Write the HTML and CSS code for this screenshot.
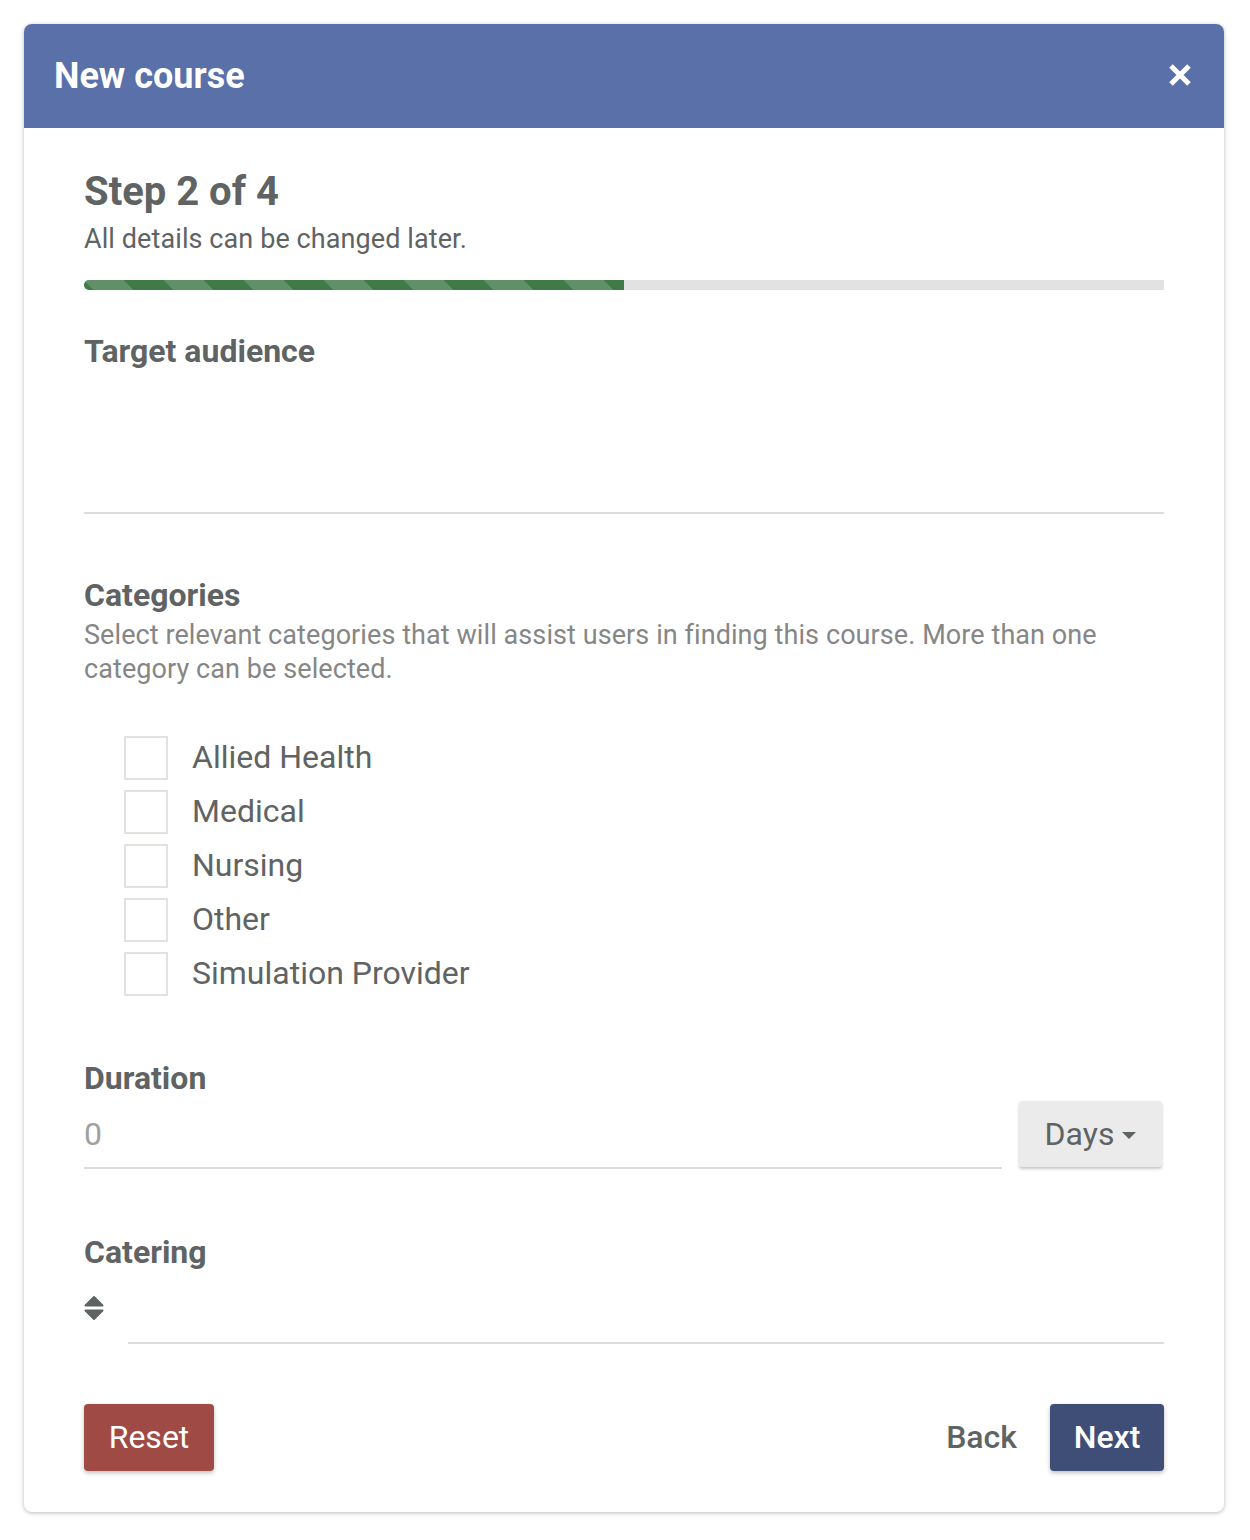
FILE: index.html
```html
<!DOCTYPE html>
<html lang="en">
<head>
<meta charset="utf-8">
<title>New course</title>
<link rel="stylesheet" href="styles.css">
</head>
<body>
<div class="modal">
  <header class="modal-header">
    <h1 class="modal-title">New course</h1>
    <button class="close-btn" aria-label="Close">
      <svg width="24" height="24" viewBox="0 0 24 24"><path d="M3 3 L21 21 M21 3 L3 21" stroke="#fff" stroke-width="5" fill="none"/></svg>
    </button>
  </header>
  <div class="modal-body">
    <h2 class="step">Step 2 of 4</h2>
    <p class="sub">All details can be changed later.</p>
    <div class="progress"><div class="progress-bar" style="width:50%"></div></div>

    <label class="field-label label-target">Target audience</label>
    <div class="textarea"></div>

    <label class="field-label label-categories">Categories</label>
    <p class="help">Select relevant categories that will assist users in finding this course. More than one category can be selected.</p>
    <ul class="checklist">
      <li class="check-row"><span class="box"></span><span class="check-label">Allied Health</span></li>
      <li class="check-row"><span class="box"></span><span class="check-label">Medical</span></li>
      <li class="check-row"><span class="box"></span><span class="check-label">Nursing</span></li>
      <li class="check-row"><span class="box"></span><span class="check-label">Other</span></li>
      <li class="check-row"><span class="box"></span><span class="check-label">Simulation Provider</span></li>
    </ul>

    <label class="field-label label-duration">Duration</label>
    <div class="duration-row">
      <div class="input"><span class="placeholder">0</span></div>
      <button class="days-btn">Days <span class="caret"></span></button>
    </div>

    <label class="field-label label-catering">Catering</label>
    <div class="catering-row">
      <svg class="sort-icon" width="20" height="26" viewBox="0 0 20 26"><path d="M1.5 10.5 L10 2 L18.5 10.5 Z" fill="#5f6363" stroke="#5f6363" stroke-width="2" stroke-linejoin="round"/><path d="M1.5 15.5 L18.5 15.5 L10 24 Z" fill="#5f6363" stroke="#5f6363" stroke-width="2" stroke-linejoin="round"/></svg>
      <div class="select"></div>
    </div>

    <footer class="modal-footer">
      <button class="btn btn-reset">Reset</button>
      <div class="footer-right">
        <button class="btn btn-flat">Back</button>
        <button class="btn btn-next">Next</button>
      </div>
    </footer>
  </div>
</div>
</body>
</html>
```

FILE: styles.css
```css
html, body {
  margin: 0;
  padding: 0;
  background: #fff;
}
body {
  font-family: Roboto, "Noto Sans", Arial, sans-serif;
  color: #5f6363;
}
.modal {
  margin: 24px;
  width: 1200px;
  border-radius: 8px;
  box-shadow: 0 1px 4px rgba(0,0,0,0.28);
  background: #fff;
  overflow: hidden;
}
.modal-header {
  height: 104px;
  background: #5970a8;
  display: flex;
  align-items: center;
  justify-content: space-between;
  padding: 0 32px 0 30px;
  box-sizing: border-box;
}
.modal-title {
  margin: 0;
  color: #fff;
  font-size: 36px;
  font-weight: 700;
  line-height: 40px;
}
.close-btn {
  background: none;
  border: 0;
  padding: 0;
  width: 24px;
  height: 24px;
  margin-top: -2px;
  display: block;
}
.close-btn svg { display: block; }
.modal-body {
  padding: 40px 60px 41px;
}
.step {
  margin: 0;
  font-size: 40px;
  font-weight: 700;
  line-height: 48px;
}
.sub {
  margin: 6px 0 0;
  font-size: 27px;
  line-height: 34px;
  letter-spacing: 0.09px;
}
.progress {
  margin-top: 24px;
  height: 10px;
  background: #e2e2e2;
  border-radius: 5px 0 0 5px;
  overflow: hidden;
}
.progress-bar {
  height: 100%;
  background-color: #3f7a48;
  background-image: linear-gradient(45deg, rgba(255,255,255,.17) 25%, transparent 25%, transparent 50%, rgba(255,255,255,.17) 50%, rgba(255,255,255,.17) 75%, transparent 75%, transparent);
  background-size: 80px 80px;
}
.field-label {
  display: block;
  font-size: 32px;
  font-weight: 700;
  line-height: 36px;
}
.label-target { margin-top: 43px; }
.textarea {
  height: 143px;
  border-bottom: 2px solid #dcdcdc;
}
.label-categories { margin-top: 63px; }
.help {
  margin: 5px 0 0;
  font-size: 27px;
  line-height: 34px;
  letter-spacing: 0.08px;
  color: #868686;
}
.checklist {
  list-style: none;
  margin: 45px 0 0;
  padding: 0 0 0 40px;
}
.check-row {
  height: 54px;
  display: flex;
  align-items: center;
}
.box {
  width: 40px;
  height: 40px;
  border: 2px solid #e2e2de;
  flex: none;
}
.check-label {
  margin-left: 24px;
  font-size: 32px;
  line-height: 38px;
  margin-top: -2px;
}
.label-duration { margin-top: 59px; }
.duration-row {
  margin-top: 5px;
  display: flex;
  align-items: flex-start;
}
.input {
  flex: 1;
  height: 66px;
  border-bottom: 2px solid #dcdcdc;
  display: flex;
  align-items: center;
}
.placeholder {
  font-size: 32px;
  line-height: 38px;
  color: #a0a0a0;
}
.days-btn {
  margin-left: 17px;
  margin-right: 2px;
  width: 143px;
  height: 66px;
  border: 0;
  border-radius: 3px;
  background: #ebebeb;
  box-shadow: 0 2px 3px rgba(0,0,0,0.22);
  font-family: inherit;
  font-size: 32px;
  color: #5f6363;
  display: flex;
  align-items: center;
  justify-content: center;
  gap: 8px;
  padding: 0;
}
.caret {
  width: 0;
  height: 0;
  border-left: 7px solid transparent;
  border-right: 7px solid transparent;
  border-top: 7px solid #5f6363;
  margin-top: 3px;
}
.label-catering { margin-top: 65px; }
.catering-row {
  height: 74px;
  display: flex;
  align-items: center;
}
.sort-icon {
  flex: none;
  display: block;
  margin-top: 1px;
}
.select {
  flex: 1;
  align-self: stretch;
  margin-left: 24px;
  border-bottom: 2px solid #dcdcdc;
}
.modal-footer {
  margin-top: 60px;
  display: flex;
  justify-content: space-between;
  align-items: center;
}
.footer-right {
  display: flex;
  align-items: center;
  gap: 9px;
}
.btn {
  height: 67px;
  border: 0;
  border-radius: 4px;
  padding: 0 24px;
  font-family: inherit;
  font-size: 32px;
  font-weight: 500;
  line-height: 67px;
}
.btn-reset {
  background: #a04a45;
  color: #fff;
  font-weight: 400;
  width: 130px;
  padding: 0;
  box-shadow: 0 2px 4px rgba(0,0,0,0.25);
}
.btn-flat {
  background: transparent;
  color: #5f6363;
}
.btn-next {
  background: #3e4e77;
  color: #fff;
  width: 114px;
  padding: 0;
  box-shadow: 0 2px 4px rgba(0,0,0,0.25);
}
```
